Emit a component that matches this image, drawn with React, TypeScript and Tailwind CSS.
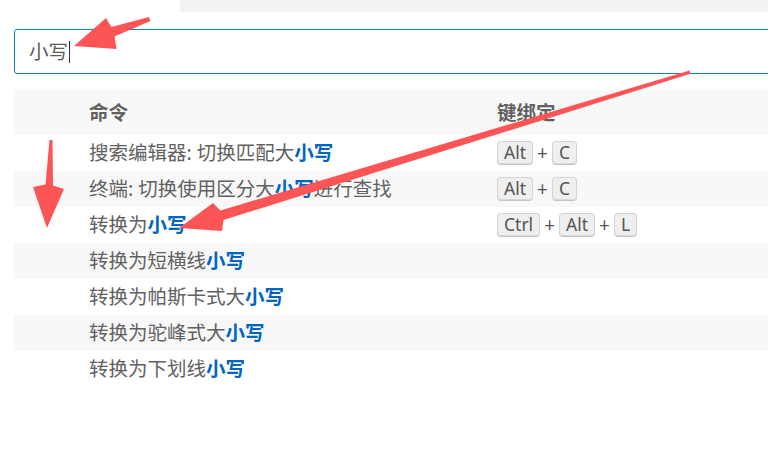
import type {ReactNode} from 'react';

type Row = {
  before: string;
  match: string;
  after?: string;
  keys?: string[];
};

const rows: Row[] = [
  {before: '搜索编辑器: 切换匹配大', match: '小写', keys: ['Alt', 'C']},
  {before: '终端: 切换使用区分大', match: '小写', after: '进行查找', keys: ['Alt', 'C']},
  {before: '转换为', match: '小写', keys: ['Ctrl', 'Alt', 'L']},
  {before: '转换为短横线', match: '小写'},
  {before: '转换为帕斯卡式大', match: '小写'},
  {before: '转换为驼峰式大', match: '小写'},
  {before: '转换为下划线', match: '小写'}
];

function Key({children}: {children: ReactNode}) {
  return (
    <span className="inline-flex h-[24px] items-center rounded-[4px] border border-[#d4d4d4] border-b-[#c4c4c4] bg-[#efefef] px-[6px] text-[17.5px] leading-none text-[#555] shadow-[inset_0_-1px_0_#d8d8d8]">
      {children}
    </span>
  );
}

function Keybinding({keys}: {keys: string[]}) {
  return (
    <div className="flex items-center">
      {keys.map((k, i) => (
        <span key={k + i} className="flex items-center">
          {i > 0 ? <span className="mx-[4px] text-[19px] text-[#555]">+</span> : null}
          <Key>{k}</Key>
        </span>
      ))}
    </div>
  );
}

export default function App() {
  return (
    <div
      className="relative h-[474px] w-[768px] overflow-hidden bg-white text-[#616161]"
      style={{fontFamily: '"Noto Sans", "Noto Sans CJK SC", sans-serif'}}
    >
      <div className="ml-[180px] h-[12px] bg-[#f3f3f3]" />

      <div className="ml-[14px] mt-[17px] flex h-[45px] w-[780px] items-center rounded-[3px] border border-[#0e7fd4] pl-[14px]">
        <span className="text-[19.5px] text-[#5a5a5a]">小写</span>
        <span className="ml-[1px] h-[22px] w-px bg-[#333]" />
      </div>

      <div className="ml-[14px] mt-[16px] w-[754px]">
        <div className="flex h-[45px] items-center bg-[#f8f8f8] text-[19.5px] font-bold">
          <div className="w-[483px] pl-[75px]">命令</div>
          <div>键绑定</div>
        </div>
        {rows.map((row, i) => (
          <div
            key={i}
            className={`flex h-[36px] items-center text-[19.5px] ${i % 2 === 1 ? 'bg-[#f8f8f8]' : 'bg-white'}`}
          >
            <div className="w-[483px] whitespace-nowrap pl-[75px]">
              {row.before}
              <span className="font-bold text-[#0066bf]">{row.match}</span>
              {row.after}
            </div>
            {row.keys ? <Keybinding keys={row.keys} /> : null}
          </div>
        ))}
      </div>

      <svg className="pointer-events-none absolute inset-0" width="768" height="474" viewBox="0 0 768 474">
        <polygon
          fill="#fd5555"
          points="74,46 106,18 111.4,27.1 149,17 150.5,21 114.6,36.5 116.5,49"
        />
        <polygon
          fill="#fd5555"
          points="179,228 213,203 220.5,210.4 689.5,70.5 690.5,73.8 223.5,220 222,231"
        />
        <polygon
          fill="#fd5555"
          points="47,228 33,187 45.5,184.5 49.5,140 52.5,140 53,185.5 64,189"
        />
      </svg>
    </div>
  );
}
